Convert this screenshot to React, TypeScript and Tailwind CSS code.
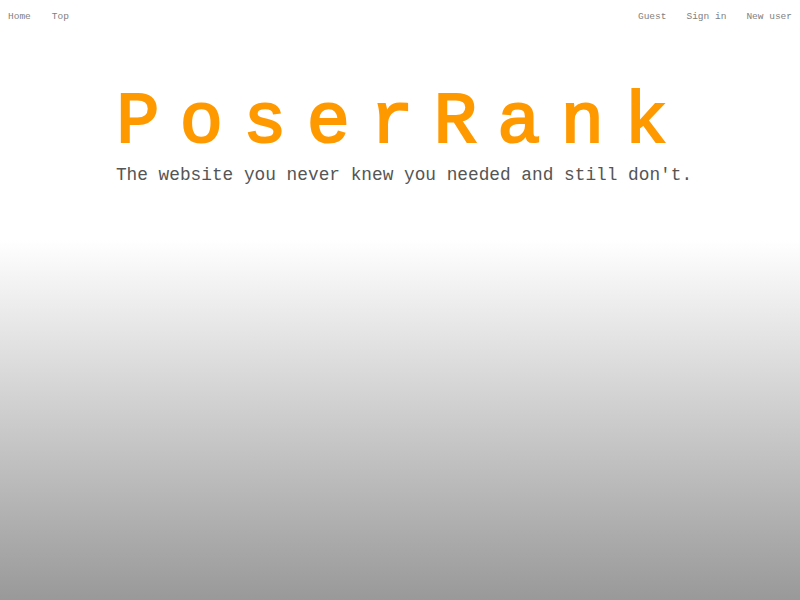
export default function App() {
  return (
    <div className="min-h-[600px] w-full bg-[linear-gradient(to_bottom,#ffffff_40%,#999999_100%)] font-['Liberation_Mono',monospace]">
      <nav className="flex justify-between px-2 pt-[10px] text-[9.5px] leading-[14px] text-[#808080]">
        <div className="flex gap-[21px]">
          <span>Home</span>
          <span>Top</span>
        </div>
        <div className="flex gap-[20px]">
          <span>Guest</span>
          <span>Sign in</span>
          <span>New user</span>
        </div>
      </nav>
      <div className="mt-[63px] text-center">
        <h1 className="pl-[4px] text-[72px] font-normal leading-[72px] tracking-[20.3px] text-[#ff9900] [-webkit-text-stroke:2.2px_#ff9900]">PoserRank</h1>
        <p className="mt-[4px] pl-[8px] text-[17.8px] leading-[24px] text-[#555]">
          The website you never knew you needed and still don't.
        </p>
      </div>
    </div>
  );
}
